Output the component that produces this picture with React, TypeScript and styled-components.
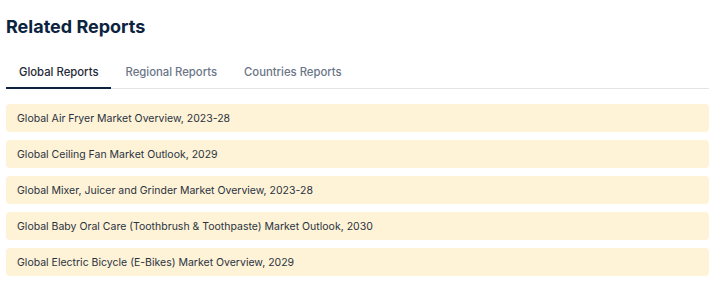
import React, { FC, useState } from "react";
import styled, { createGlobalStyle } from "styled-components";

const GlobalStyle = createGlobalStyle`
  body {
    margin: 0;
    background: #ffffff;
    font-family: Inter, "Noto Sans", sans-serif;
  }
`;

const Wrapper = styled.section`
  padding: 13px 9px 0 6px;
`;

const Heading = styled.h2`
  margin: 0 0 16px;
  font-size: 18px;
  line-height: 28px;
  font-weight: 700;
  color: #0c2340;
`;

const TabBar = styled.div`
  display: flex;
  gap: 1px;
  border-bottom: 1px solid #e3e5e8;
`;

const Tab = styled.button<{ $active?: boolean }>`
  border: none;
  background: none;
  padding: 0 13px;
  height: 32px;
  margin-bottom: -1px;
  font-family: inherit;
  font-size: 11.3px;
  font-weight: 500;
  cursor: pointer;
  color: ${(p) => (p.$active ? "#1f2a37" : "#6b7588")};
  border-bottom: 2px solid ${(p) => (p.$active ? "#0c2340" : "transparent")};
`;

const List = styled.ul`
  list-style: none;
  margin: 15px 0 0;
  padding: 0;
  display: flex;
  flex-direction: column;
  gap: 8px;
`;

const Row = styled.li`
  background: #fef3d7;
  border-radius: 4px;
  height: 28px;
  display: flex;
  align-items: center;
  padding: 0 11px;
  font-size: 10.5px;
  color: #2a323f;
`;

const tabs = ["Global Reports", "Regional Reports", "Countries Reports"];

const reports = [
  "Global Air Fryer Market Overview, 2023-28",
  "Global Ceiling Fan Market Outlook, 2029",
  "Global Mixer, Juicer and Grinder Market Overview, 2023-28",
  "Global Baby Oral Care (Toothbrush & Toothpaste) Market Outlook, 2030",
  "Global Electric Bicycle (E-Bikes) Market Overview, 2029",
];

const App: FC = () => {
  const [active, setActive] = useState(0);
  return (
    <>
      <GlobalStyle />
      <Wrapper>
        <Heading>Related Reports</Heading>
        <TabBar>
          {tabs.map((t, i) => (
            <Tab key={t} $active={i === active} onClick={() => setActive(i)}>
              {t}
            </Tab>
          ))}
        </TabBar>
        <List>
          {reports.map((r) => (
            <Row key={r}>{r}</Row>
          ))}
        </List>
      </Wrapper>
    </>
  );
};

export default App;
